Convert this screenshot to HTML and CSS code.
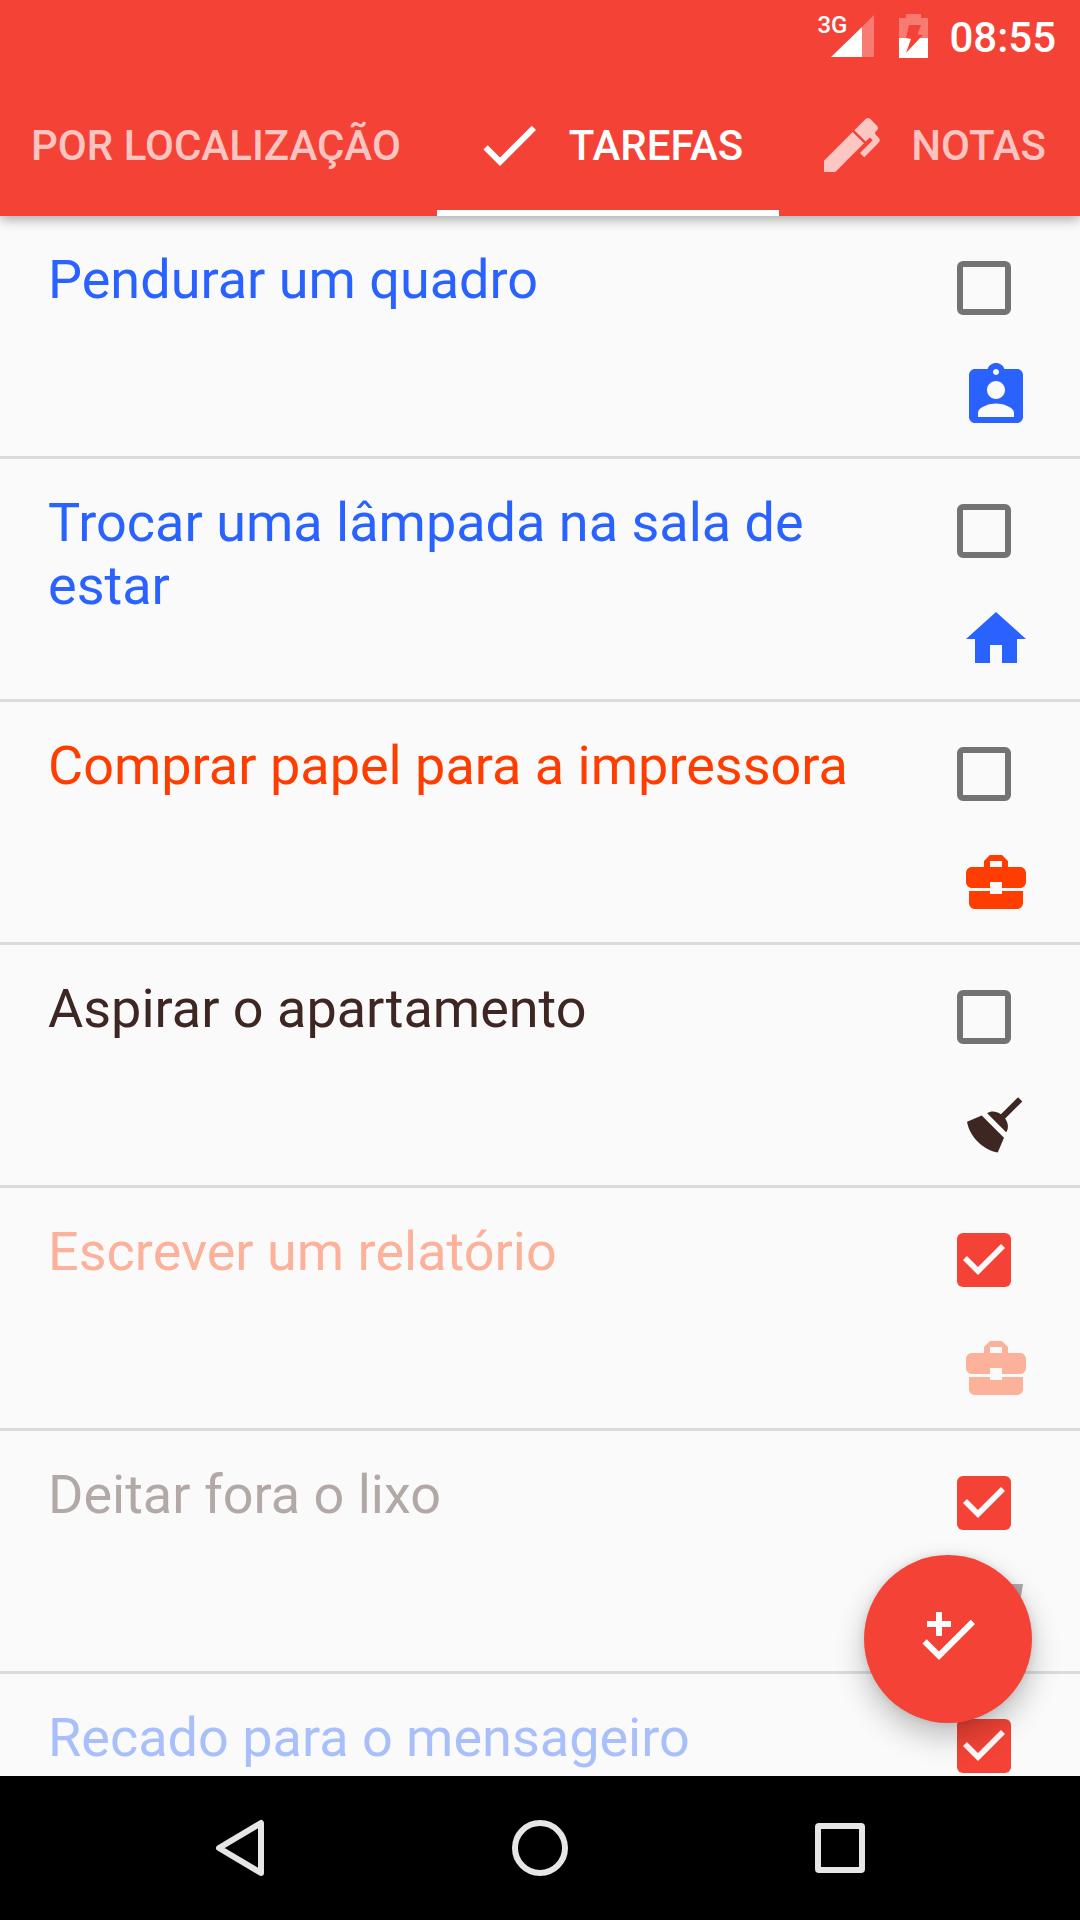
FILE: index.html
```html
<!DOCTYPE html>
<html lang="pt">
<head>
  <meta charset="UTF-8">
  <meta name="viewport" content="width=device-width, initial-scale=1.0">
  <title>Tarefas</title>
  <link rel="stylesheet" href="styles.css">
</head>
<body>
  <!-- shared icons -->
  <svg class="sprite" aria-hidden="true">
    <symbol id="check" viewBox="0 0 24 24"><path d="M21,7L9,19L3.5,13.5L4.91,12.09L9,16.17L19.59,5.59L21,7Z"/></symbol>
    <symbol id="pen" viewBox="0 0 24 24"><path d="M20.71,7.04C20.37,7.38 20.04,7.71 20.03,8.04C20,8.36 20.34,8.69 20.66,9C21.14,9.5 21.61,9.95 21.59,10.44C21.57,10.93 21.06,11.44 20.55,11.94L16.42,16.08L15,14.66L19.25,10.42L18.29,9.46L16.87,10.87L13.12,7.12L16.96,3.29C17.35,2.9 18,2.9 18.37,3.29L20.71,5.63C21.1,6 21.1,6.65 20.71,7.04M3,17.25L12.56,7.68L16.31,11.43L6.75,21H3V17.25Z"/></symbol>
    <symbol id="person" viewBox="0 0 24 24"><path d="M19 3h-4.18C14.4 1.84 13.3 1 12 1c-1.3 0-2.4.84-2.82 2H5c-1.1 0-2 .9-2 2v14c0 1.1.9 2 2 2h14c1.1 0 2-.9 2-2V5c0-1.1-.9-2-2-2zm-7 0c.55 0 1 .45 1 1s-.45 1-1 1-1-.45-1-1 .45-1 1-1zm0 4c1.66 0 3 1.34 3 3s-1.34 3-3 3-3-1.34-3-3 1.34-3 3-3zm6 12H6v-1.4c0-2 4-3.1 6-3.1s6 1.1 6 3.1V19z"/></symbol>
    <symbol id="home" viewBox="0 0 24 24"><path d="M10 20v-6h4v6h5v-8h3L12 3 2 12h3v8z"/></symbol>
    <symbol id="briefcase" viewBox="0 0 24 24"><path d="M10 16v-1H3.01L3 19c0 1.11.89 2 2 2h14c1.11 0 2-.89 2-2v-4h-7v1h-4zm10-9h-4.01V5l-2-2h-4l-2 2v2H4c-1.1 0-2 .9-2 2v3c0 1.11.89 2 2 2h6v-2h4v2h6c1.1 0 2-.9 2-2V9c0-1.1-.9-2-2-2zm-6 0h-4V5h4v2z"/></symbol>
    <symbol id="broom" viewBox="0 0 24 24"><path d="M19.36,2.72L20.78,4.14L15.06,9.85C16.13,11.39 16.28,13.24 15.38,14.44L9.06,8.12C10.26,7.22 12.11,7.37 13.65,8.44L19.36,2.72M5.93,17.57C3.92,15.56 2.69,13.16 2.35,10.92L7.23,8.83L14.67,16.27L12.58,21.15C10.34,20.81 7.94,19.58 5.93,17.57Z"/></symbol>
    <symbol id="trash" viewBox="0 0 24 24"><path d="M21.03,3L18,20.31C17.83,21.27 17,22 16,22H8C7,22 6.17,21.27 6,20.31L2.97,3H21.03Z"/></symbol>
  </svg>

  <header class="app-bar">
    <div class="status">
      <div class="signal">
        <span>3G</span>
        <svg width="43" height="42" viewBox="0 0 43 42"><path d="M31 12L43 0V42H31Z" opacity=".3"/><path d="M0 42L31 12V42Z"/></svg>
      </div>
      <svg width="29" height="44" viewBox="0 0 29 44">
        <path d="M7 0h15v4h7v20h-8l3-3-5.500-.5L22 11H10L7 24H0V4h7z" opacity=".3"/>
        <path d="M0 24h7l5 1L7 39 21 24h8v20H0z"/>
      </svg>
      <time>08:55</time>
    </div>
    <nav class="tabs">
      <a class="tab" href="#localizacao">POR LOCALIZAÇÃO</a>
      <a class="tab active" href="#tarefas"><svg class="icon"><use href="#check"/></svg>TAREFAS</a>
      <a class="tab" href="#notas"><svg class="icon"><use href="#pen"/></svg>NOTAS</a>
    </nav>
  </header>

  <main class="content">
    <ul class="tasks" id="tarefas">
      <li class="task blue">
        <label class="title" for="t1">Pendurar um quadro</label>
        <div class="side">
          <span class="box"><input type="checkbox" id="t1"></span>
          <svg class="icon"><use href="#person"/></svg>
        </div>
      </li>
      <li class="task blue">
        <label class="title" for="t2">Trocar uma lâmpada na sala de estar</label>
        <div class="side">
          <span class="box"><input type="checkbox" id="t2"></span>
          <svg class="icon"><use href="#home"/></svg>
        </div>
      </li>
      <li class="task orange">
        <label class="title" for="t3">Comprar papel para a impressora</label>
        <div class="side">
          <span class="box"><input type="checkbox" id="t3"></span>
          <svg class="icon"><use href="#briefcase"/></svg>
        </div>
      </li>
      <li class="task brown">
        <label class="title" for="t4">Aspirar o apartamento</label>
        <div class="side">
          <span class="box"><input type="checkbox" id="t4"></span>
          <svg class="icon"><use href="#broom"/></svg>
        </div>
      </li>
      <li class="task orange done">
        <label class="title" for="t5">Escrever um relatório</label>
        <div class="side">
          <span class="box"><input type="checkbox" id="t5" checked></span>
          <svg class="icon"><use href="#briefcase"/></svg>
        </div>
      </li>
      <li class="task brown done">
        <label class="title" for="t6">Deitar fora o lixo</label>
        <div class="side">
          <span class="box"><input type="checkbox" id="t6" checked></span>
          <svg class="icon"><use href="#trash"/></svg>
        </div>
      </li>
      <li class="task blue done">
        <label class="title" for="t7">Recado para o mensageiro</label>
        <div class="side">
          <span class="box"><input type="checkbox" id="t7" checked></span>
          <svg class="icon"><use href="#person"/></svg>
        </div>
      </li>
    </ul>
    <button class="fab" aria-label="Nova tarefa">
      <svg class="icon" viewBox="0 0 24 24"><path d="M8 3h2v3h3v2h-3v3H8V8H5V6h3z"/><use href="#check"/></svg>
    </button>
  </main>

  <footer class="nav-bar">
    <button aria-label="Voltar">
      <svg width="60" height="60" viewBox="0 0 60 60"><path d="M51 5V55L9 30Z"/></svg>
    </button>
    <button aria-label="Início">
      <svg width="60" height="60" viewBox="0 0 60 60"><circle cx="30" cy="30" r="25"/></svg>
    </button>
    <button aria-label="Recentes">
      <svg width="60" height="60" viewBox="0 0 60 60"><rect x="8" y="8" width="44" height="44" rx="1"/></svg>
    </button>
  </footer>
</body>
</html>
```

FILE: styles.css
```css
* {
  box-sizing: border-box;
}

body {
  font-family: Roboto, sans-serif;
  margin: 0;
  height: 100vh;
  display: flex;
  flex-direction: column;
  background-color: #fafafa;
}

button {
  padding: 0;
  border: none;
  background: none;
  cursor: pointer;
}

svg {
  display: block;
  fill: currentColor;
}

.sprite {
  display: none;
}

.icon {
  flex: none;
  width: 72px;
  height: 72px;
}

/* top bar */
.app-bar {
  position: relative;
  z-index: 1;
  overflow-x: clip;
  color: #fff;
  background-color: #f44336;
  box-shadow: 0 3px 12px rgba(0, 0, 0, 0.35);
}

.status {
  display: flex;
  justify-content: flex-end;
  align-items: center;
  height: 72px;
  padding: 0 24px;
  font-size: 42px;
  font-weight: 500;
}

.status time {
  margin-left: 21px;
  padding-top: 2px;
}

.signal {
  display: flex;
  align-items: flex-start;
  margin-right: 25px;
}

.signal span {
  margin-right: -16px;
  font-size: 24px;
  line-height: 20px;
  font-weight: 500;
}

.tabs {
  display: flex;
  justify-content: flex-end;
  margin-right: -2px;
}

.tab {
  flex: none;
  display: flex;
  align-items: center;
  gap: 24px;
  height: 144px;
  padding: 8px 36px 0;
  border-bottom: 6px solid transparent;
  color: rgba(255, 255, 255, 0.7);
  font-size: 42px;
  font-weight: 500;
  text-decoration: none;
  white-space: nowrap;
}

.tab.active {
  color: #fff;
  border-color: #fff;
}

/* task list */
.content {
  position: relative;
  flex: 1;
  min-height: 0;
}

.tasks {
  height: 100%;
  margin: 0;
  padding: 0;
  list-style: none;
  overflow-y: auto;
  scrollbar-width: none;
}

.task {
  display: flex;
  gap: 48px;
  padding: 24px 48px;
  border-bottom: 3px solid #dbdbdb;
}

.title {
  flex: 1;
  padding-top: 8px;
  font-size: 54px;
  line-height: 63px;
}

.side {
  display: flex;
  flex-direction: column;
  align-items: flex-end;
  gap: 24px;
}

.box {
  display: grid;
  place-items: center;
  width: 96px;
  height: 96px;
}

.box input {
  appearance: none;
  width: 54px;
  height: 54px;
  margin: 0;
  border: 6px solid #737373;
  border-radius: 6px;
}

.box input:checked {
  border: none;
  background-color: #f44336;
}

.box input:checked::after {
  content: "";
  display: block;
  height: 54px;
  background-color: #fafafa;
  clip-path: polygon(21px 42px, 6px 27px, 10px 23px, 21px 34px, 44px 11px, 48px 15px);
}

.blue {
  color: #2962ff;
}

.orange {
  color: #ff3d00;
}

.brown {
  color: #3e2723;
}

.done .title,
.done .icon {
  opacity: 0.38;
}

.fab {
  position: absolute;
  right: 48px;
  bottom: 53px;
  display: grid;
  place-items: center;
  width: 168px;
  height: 168px;
  border-radius: 50%;
  color: #fff;
  background-color: #f44336;
  box-shadow: 0 14px 30px rgba(0, 0, 0, 0.24), 0 0 8px rgba(0, 0, 0, 0.1);
}

/* system buttons */
.nav-bar {
  display: flex;
  height: 144px;
  padding: 0 90px;
  background-color: #000;
}

.nav-bar button {
  flex: 1;
  display: grid;
  place-items: center;
}

.nav-bar svg {
  fill: none;
  stroke: #e6e6e6;
  stroke-width: 6;
  stroke-linejoin: round;
}
```
